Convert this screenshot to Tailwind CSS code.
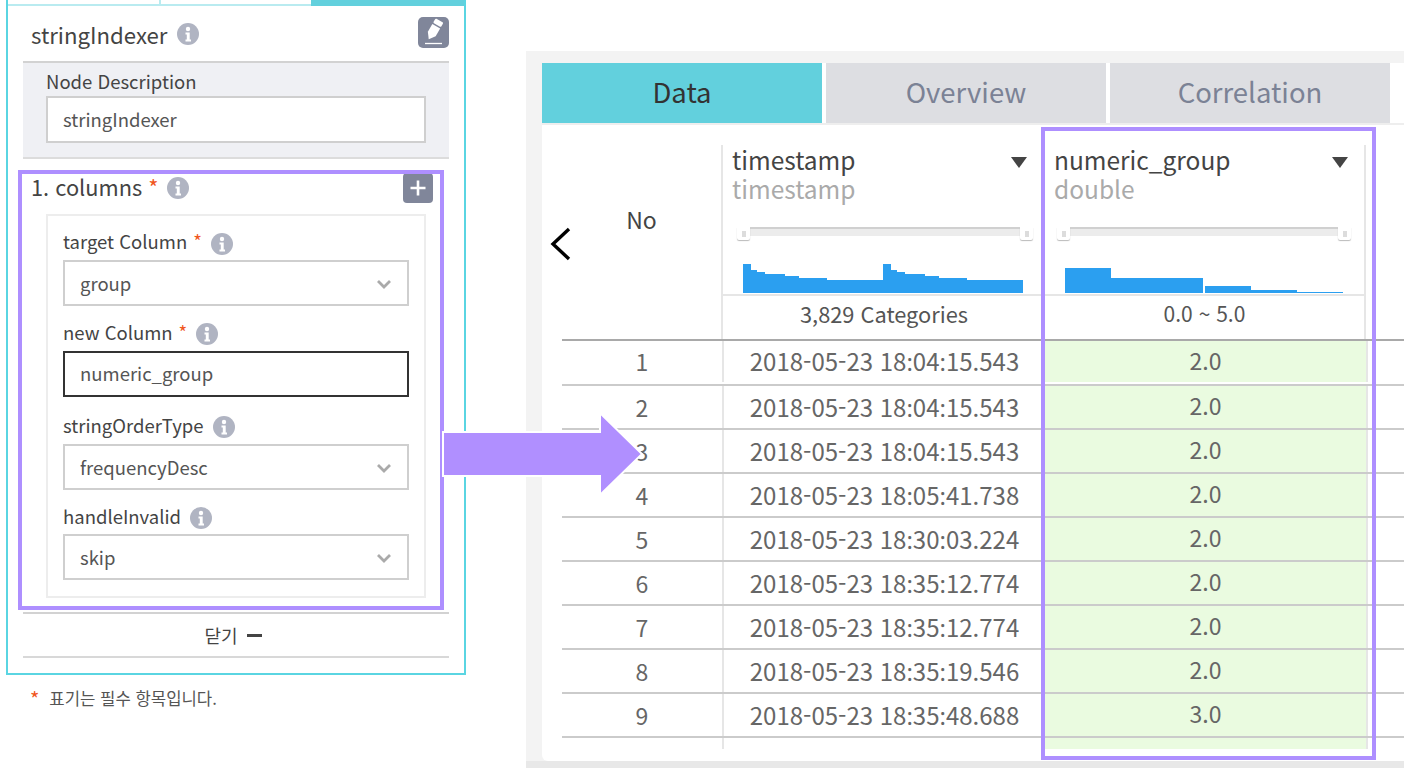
<!DOCTYPE html>
<html lang="ko">
<head>
    <meta charset="UTF-8">
    <title>stringIndexer</title>
    <script src="https://cdn.jsdelivr.net/npm/@tailwindcss/browser@4"></script>
</head>
<body class="relative h-[768px] w-[1404px] overflow-hidden bg-white font-['Noto_Sans_CJK_KR','Noto_Sans',sans-serif] text-[#444]">
<div class="flex h-full">

    <!-- left: node properties -->
    <div class="ml-[6px] w-[460px] shrink-0">
        <div class="h-[675px] border-2 border-t-0 border-[#5ad5e2] flex flex-col">
            <div class="flex h-[6px] shrink-0 border-b-2 border-[#b9ebf0]">
                <div class="w-[153px] border-r-2 border-[#b9ebf0]"></div>
                <div class="w-[150px]"></div>
                <div class="flex-1 bg-[#62d0dd] -mb-[2px]"></div>
            </div>
            <div class="flex items-center h-[55px] pl-[23px] pr-[15px]">
                <span class="mt-[1px] text-[22.2px] leading-none">stringIndexer</span>
                <svg class="ml-[10px]" width="22" height="22" viewBox="0 0 22 22"><circle cx="11" cy="11" r="11" fill="#b0b4c2"/><circle cx="11" cy="6" r="2.2" fill="#fff"/><path d="M8.500 9.500h4.200v7h1.300v2H8.500v-2h1.300v-5H8.500z" fill="#fff"/></svg>
                <div class="ml-auto -mt-[2px] flex h-[31px] w-[31px] items-center justify-center rounded-[5px] bg-[#80869a]">
                    <svg width="31" height="31" viewBox="0 0 31 31"><g transform="rotate(30 15.500 14)" fill="#fff"><rect x="11" y="2" width="9" height="5" rx="1"/><path d="M11 8.500h9v9l-4.500 6-4.500-6z"/></g><path d="M7 26.500h17" stroke="#fff" stroke-width="1.300"/></svg>
                </div>
            </div>
            <div class="mx-[15px] h-[98px] shrink-0 border-t-2 border-b-2 border-t-[#d2d2d2] border-b-[#dcdcdc] bg-[#eff0f4] pl-[23px] pr-[23px]">
                <div class="h-[33px] text-[18.5px] leading-[36px]">Node Description</div>
                <div class="flex h-[47px] items-center border-2 border-[#cfcfcf] bg-white pl-[15px] text-[18.5px] text-[#555]">stringIndexer</div>
            </div>
            <div class="flex h-[55px] shrink-0 items-center pl-[23px] pr-[31px] pt-[2px]">
                <span class="text-[21.800px]">1. columns <span class="text-[#f0561d]">*</span></span>
                <svg class="ml-[9px]" width="22" height="22" viewBox="0 0 22 22"><circle cx="11" cy="11" r="11" fill="#b0b4c2"/><circle cx="11" cy="6" r="2.2" fill="#fff"/><path d="M8.500 9.500h4.200v7h1.300v2H8.500v-2h1.300v-5H8.500z" fill="#fff"/></svg>
                <div class="ml-auto flex h-[30px] w-[30px] items-center justify-center rounded-[4px] bg-[#80869a]">
                    <svg width="18" height="18" viewBox="0 0 18 18"><path d="M9 1.500v15M1.500 9h15" stroke="#fff" stroke-width="2.600"/></svg>
                </div>
            </div>
            <div class="ml-[38px] h-[384px] w-[380px] shrink-0 border-2 border-[#ededed] px-[15px]">
                <div class="flex h-[44px] items-center pt-[8px] text-[18.5px]"><span>target Column</span><span class="ml-[6px] text-[#f0561d]">*</span>
                    <svg class="ml-[9px] mt-[3px]" width="22" height="22" viewBox="0 0 22 22"><circle cx="11" cy="11" r="11" fill="#b0b4c2"/><circle cx="11" cy="6" r="2.2" fill="#fff"/><path d="M8.500 9.500h4.200v7h1.300v2H8.500v-2h1.300v-5H8.500z" fill="#fff"/></svg>
                </div>
                <div class="flex h-[46px] items-center justify-between border-2 border-[#cfcfcf] px-[15px] pt-[1px] text-[18.5px] text-[#555]">group
                    <svg width="16" height="10" viewBox="0 0 16 10"><path d="M2 2l6 6 6-6" fill="none" stroke="#aaa" stroke-width="2.800"/></svg>
                </div>
                <div class="flex h-[45px] items-center pt-[8px] text-[18.5px]"><span>new Column</span><span class="ml-[6px] text-[#f0561d]">*</span>
                    <svg class="ml-[9px] mt-[3px]" width="22" height="22" viewBox="0 0 22 22"><circle cx="11" cy="11" r="11" fill="#b0b4c2"/><circle cx="11" cy="6" r="2.2" fill="#fff"/><path d="M8.500 9.500h4.200v7h1.300v2H8.500v-2h1.300v-5H8.500z" fill="#fff"/></svg>
                </div>
                <div class="flex h-[46px] items-center border-2 border-[#333] px-[15px] text-[18.5px] text-[#555]">numeric_group</div>
                <div class="flex h-[47px] items-center pt-[10px] text-[18.5px]"><span>stringOrderType</span>
                    <svg class="ml-[9px] mt-[3px]" width="22" height="22" viewBox="0 0 22 22"><circle cx="11" cy="11" r="11" fill="#b0b4c2"/><circle cx="11" cy="6" r="2.2" fill="#fff"/><path d="M8.500 9.500h4.200v7h1.300v2H8.500v-2h1.300v-5H8.500z" fill="#fff"/></svg>
                </div>
                <div class="flex h-[46px] items-center justify-between border-2 border-[#cfcfcf] px-[15px] pt-[1px] text-[18.5px] text-[#555]">frequencyDesc
                    <svg width="16" height="10" viewBox="0 0 16 10"><path d="M2 2l6 6 6-6" fill="none" stroke="#aaa" stroke-width="2.800"/></svg>
                </div>
                <div class="flex h-[44px] items-center pt-[9px] text-[18.5px]"><span>handleInvalid</span>
                    <svg class="ml-[9px] mt-[3px]" width="22" height="22" viewBox="0 0 22 22"><circle cx="11" cy="11" r="11" fill="#b0b4c2"/><circle cx="11" cy="6" r="2.2" fill="#fff"/><path d="M8.500 9.500h4.200v7h1.300v2H8.500v-2h1.300v-5H8.500z" fill="#fff"/></svg>
                </div>
                <div class="flex h-[46px] items-center justify-between border-2 border-[#cfcfcf] px-[15px] pt-[1px] text-[18.5px] text-[#555]">skip
                    <svg width="16" height="10" viewBox="0 0 16 10"><path d="M2 2l6 6 6-6" fill="none" stroke="#aaa" stroke-width="2.800"/></svg>
                </div>
            </div>
            <div class="mx-[15px] mt-[14px] flex h-[46px] shrink-0 items-center justify-center gap-[9px] border-t-2 border-b-2 border-t-[#d2d2d2] border-b-[#d8d8d8] pr-[6px] text-[18px]">닫기
                <span class="h-[3px] w-[15px] bg-[#444]"></span>
            </div>
        </div>
        <div class="flex items-center gap-[10px] pl-[24px] pt-[11px] text-[16.700px] text-[#555]"><span class="text-[20px] leading-[26px] text-[#f0561d]">*</span><span>표기는 필수 항목입니다.</span></div>
    </div>

    <!-- right: data panel -->
    <div class="ml-[60px] mt-[51px] h-[717px] flex-1 bg-[#f3f3f3] flex flex-col">
        <div class="ml-[16px] mt-[12px] h-[698px] rounded-bl-[6px] bg-white">
            <div class="flex h-[62px] gap-[4px] border-b-2 border-[#eeeeee] text-[27.500px] text-[#7b8295]">
                <div class="flex h-[60px] w-[280px] items-center justify-center bg-[#62d0dd] pb-[2px] text-[#333]">Data</div>
                <div class="flex h-[60px] w-[280px] items-center justify-center bg-[#dddee2] pb-[2px]">Overview</div>
                <div class="flex h-[60px] w-[280px] items-center justify-center bg-[#dddee2] pb-[2px]">Correlation</div>
            </div>

            <div class="relative ml-[20px]">
                <svg class="absolute -left-[13px] top-[101px]" width="24" height="36" viewBox="0 0 24 36"><path d="M20 3L4 18l16 15" fill="none" stroke="#000" stroke-width="3.400"/></svg>

                <!-- header -->
                <div class="grid h-[216px] grid-cols-[159px_324px_1fr] border-b-2 border-[#a9a9a9] pt-[20px]">
                    <div class="flex items-start justify-center pt-[57px] text-[23px] leading-[34px]">No</div>
                    <div class="flex flex-col border-l-2 border-[#e6e6e6]">
                        <div class="flex h-[149px] flex-col pl-[9px] pr-[18px]">
                            <div class="flex h-[30px] items-center justify-between text-[24.500px] leading-[30px]">timestamp
                                <svg class="mt-[5px]" width="16" height="11" viewBox="0 0 16 11"><path d="M0 0h16L8 11z" fill="#444"/></svg>
                            </div>
                            <div class="h-[30px] text-[24.500px] leading-[28px] text-[#aaa]">timestamp</div>
                            <div class="relative mt-[22px] ml-[17px] mr-[6px] h-[9px] border-t-2 border-[#d0d0d0] bg-[#ececec]">
                                <div class="absolute -left-[12px] -top-[2px] flex h-[13px] w-[13px] items-center justify-center rounded-b-[2px] bg-white shadow-[0_1px_1px_#bbb]"><span class="h-[6px] w-[4px] bg-[#dcdcdc]"></span></div>
                                <div class="absolute -right-[12px] -top-[2px] flex h-[13px] w-[13px] items-center justify-center rounded-b-[2px] bg-white shadow-[0_1px_1px_#bbb]"><span class="h-[6px] w-[4px] bg-[#dcdcdc]"></span></div>
                            </div>
                            <svg class="ml-[11px] mt-[28px] shrink-0" width="280" height="29" viewBox="0 0 280 29" fill="#2b9ff0"><rect x="0" y="0" width="8" height="29"/><rect x="8" y="6" width="6" height="23"/><rect x="14" y="8" width="8" height="21"/><rect x="22" y="10" width="20" height="19"/><rect x="42" y="12" width="14" height="17"/><rect x="56" y="14" width="28" height="15"/><rect x="84" y="16" width="56" height="13"/><rect x="140" y="0" width="8" height="29"/><rect x="148" y="6" width="6" height="23"/><rect x="154" y="8" width="8" height="21"/><rect x="162" y="10" width="20" height="19"/><rect x="182" y="12" width="14" height="17"/><rect x="196" y="14" width="28" height="15"/><rect x="224" y="16" width="56" height="13"/></svg>
                        </div>
                        <div class="flex h-[45px] items-center justify-center border-t-2 border-[#e6e6e6] pb-[7px] text-[21.800px] text-[#555]">3,829 Categories</div>
                    </div>
                    <div class="flex w-[321px] flex-col border-r-2 border-[#e6e6e6]">
                        <div class="flex h-[149px] flex-col pl-[9px] pr-[16px]">
                            <div class="flex h-[30px] items-center justify-between text-[24.500px] leading-[30px]">numeric_group
                                <svg class="mt-[5px]" width="16" height="11" viewBox="0 0 16 11"><path d="M0 0h16L8 11z" fill="#444"/></svg>
                            </div>
                            <div class="h-[30px] text-[24.500px] leading-[28px] text-[#aaa]">double</div>
                            <div class="relative mt-[22px] ml-[16px] mr-[10px] h-[9px] border-t-2 border-[#d0d0d0] bg-[#ececec]">
                                <div class="absolute -left-[13px] -top-[2px] flex h-[13px] w-[13px] items-center justify-center rounded-b-[2px] bg-white shadow-[0_1px_1px_#bbb]"><span class="h-[6px] w-[4px] bg-[#dcdcdc]"></span></div>
                                <div class="absolute -right-[13px] -top-[2px] flex h-[13px] w-[13px] items-center justify-center rounded-b-[2px] bg-white shadow-[0_1px_1px_#bbb]"><span class="h-[6px] w-[4px] bg-[#dcdcdc]"></span></div>
                            </div>
                            <svg class="ml-[11px] mt-[28px] shrink-0" width="280" height="29" viewBox="0 0 280 29" fill="#2b9ff0"><rect x="0" y="4" width="46" height="25"/><rect x="46" y="14" width="92" height="15"/><rect x="140" y="22" width="46" height="7"/><rect x="186" y="26" width="46" height="3"/><rect x="232" y="28" width="46" height="1"/></svg>
                        </div>
                        <div class="flex h-[45px] items-center justify-center border-t-2 border-[#e6e6e6] pb-[7px] text-[21px] text-[#555]">0.0 ~ 5.0</div>
                    </div>
                </div>

                <!-- rows -->
                <div class="text-[23px] text-[#666]">
                    <div class="grid h-[45px] grid-cols-[160px_323px_323px_1fr] items-stretch border-b-2 border-[#cbcbcb] pb-[2px]"><div class="flex items-center justify-center">1</div><div class="flex items-center justify-center border-l-2 border-[#e6e6e6] text-[24px]"><span>2018-05-23 18<span class="font-['Noto_Sans']">:</span>04<span class="font-['Noto_Sans']">:</span>15.543</span></div><div class="flex items-center justify-center border-r-2 border-[#e6e6e6] bg-[#eafbe0] pb-[2px]">2.0</div></div>
                    <div class="grid h-[44px] grid-cols-[160px_323px_323px_1fr] items-stretch border-b-2 border-[#cbcbcb]"><div class="flex items-center justify-center">2</div><div class="flex items-center justify-center border-l-2 border-[#e6e6e6] text-[24px]"><span>2018-05-23 18<span class="font-['Noto_Sans']">:</span>04<span class="font-['Noto_Sans']">:</span>15.543</span></div><div class="flex items-center justify-center border-r-2 border-[#e6e6e6] bg-[#eafbe0] pb-[3px]">2.0</div></div>
                    <div class="grid h-[44px] grid-cols-[160px_323px_323px_1fr] items-stretch border-b-2 border-[#cbcbcb]"><div class="flex items-center justify-center">3</div><div class="flex items-center justify-center border-l-2 border-[#e6e6e6] text-[24px]"><span>2018-05-23 18<span class="font-['Noto_Sans']">:</span>04<span class="font-['Noto_Sans']">:</span>15.543</span></div><div class="flex items-center justify-center border-r-2 border-[#e6e6e6] bg-[#eafbe0] pb-[3px]">2.0</div></div>
                    <div class="grid h-[44px] grid-cols-[160px_323px_323px_1fr] items-stretch border-b-2 border-[#cbcbcb]"><div class="flex items-center justify-center">4</div><div class="flex items-center justify-center border-l-2 border-[#e6e6e6] text-[24px]"><span>2018-05-23 18<span class="font-['Noto_Sans']">:</span>05<span class="font-['Noto_Sans']">:</span>41.738</span></div><div class="flex items-center justify-center border-r-2 border-[#e6e6e6] bg-[#eafbe0] pb-[3px]">2.0</div></div>
                    <div class="grid h-[44px] grid-cols-[160px_323px_323px_1fr] items-stretch border-b-2 border-[#cbcbcb]"><div class="flex items-center justify-center">5</div><div class="flex items-center justify-center border-l-2 border-[#e6e6e6] text-[24px]"><span>2018-05-23 18<span class="font-['Noto_Sans']">:</span>30<span class="font-['Noto_Sans']">:</span>03.224</span></div><div class="flex items-center justify-center border-r-2 border-[#e6e6e6] bg-[#eafbe0] pb-[3px]">2.0</div></div>
                    <div class="grid h-[44px] grid-cols-[160px_323px_323px_1fr] items-stretch border-b-2 border-[#cbcbcb]"><div class="flex items-center justify-center">6</div><div class="flex items-center justify-center border-l-2 border-[#e6e6e6] text-[24px]"><span>2018-05-23 18<span class="font-['Noto_Sans']">:</span>35<span class="font-['Noto_Sans']">:</span>12.774</span></div><div class="flex items-center justify-center border-r-2 border-[#e6e6e6] bg-[#eafbe0] pb-[3px]">2.0</div></div>
                    <div class="grid h-[44px] grid-cols-[160px_323px_323px_1fr] items-stretch border-b-2 border-[#cbcbcb]"><div class="flex items-center justify-center">7</div><div class="flex items-center justify-center border-l-2 border-[#e6e6e6] text-[24px]"><span>2018-05-23 18<span class="font-['Noto_Sans']">:</span>35<span class="font-['Noto_Sans']">:</span>12.774</span></div><div class="flex items-center justify-center border-r-2 border-[#e6e6e6] bg-[#eafbe0] pb-[3px]">2.0</div></div>
                    <div class="grid h-[44px] grid-cols-[160px_323px_323px_1fr] items-stretch border-b-2 border-[#cbcbcb]"><div class="flex items-center justify-center">8</div><div class="flex items-center justify-center border-l-2 border-[#e6e6e6] text-[24px]"><span>2018-05-23 18<span class="font-['Noto_Sans']">:</span>35<span class="font-['Noto_Sans']">:</span>19.546</span></div><div class="flex items-center justify-center border-r-2 border-[#e6e6e6] bg-[#eafbe0] pb-[3px]">2.0</div></div>
                    <div class="grid h-[44px] grid-cols-[160px_323px_323px_1fr] items-stretch border-b-2 border-[#cbcbcb]"><div class="flex items-center justify-center">9</div><div class="flex items-center justify-center border-l-2 border-[#e6e6e6] text-[24px]"><span>2018-05-23 18<span class="font-['Noto_Sans']">:</span>35<span class="font-['Noto_Sans']">:</span>48.688</span></div><div class="flex items-center justify-center border-r-2 border-[#e6e6e6] bg-[#eafbe0] pb-[3px]">3.0</div></div>
                    <div class="grid h-[11px] grid-cols-[160px_323px_323px_1fr]"><div></div><div class="border-l-2 border-[#e6e6e6]"></div><div class="border-r-2 border-[#e6e6e6] bg-[#eafbe0]"></div></div>
                </div>
            </div>
        </div>
        <div class="mt-auto h-[7px] bg-[#e8e8e8]"></div>
    </div>
</div>

<!-- annotations drawn over the screenshot -->
<div class="pointer-events-none absolute left-[18px] top-[170px] h-[440px] w-[426px] border-4 border-[#ae8fff]"></div>
<div class="pointer-events-none absolute left-[1041px] top-[127px] h-[633px] w-[335px] border-4 border-[#ae8fff]"></div>
<svg class="pointer-events-none absolute left-[440px] top-[410px]" width="206" height="88" viewBox="0 0 206 88">
    <path d="M3 22H160V3L202 44 160 85V66H3z" fill="#b08fff" stroke="#fff" stroke-width="2"/>
</svg>
</body>
</html>
